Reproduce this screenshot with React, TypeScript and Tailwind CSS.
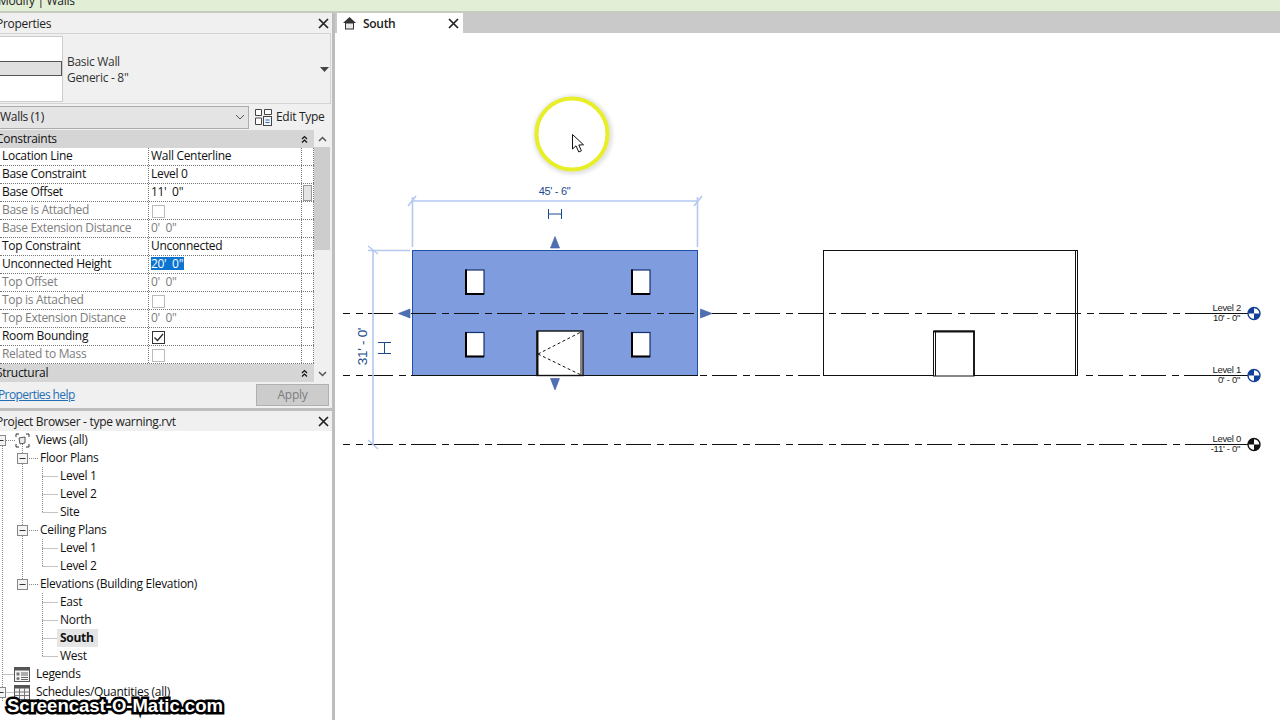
import React from "react";

type Row = { label: string; value?: string; check?: boolean; checked?: boolean; dim?: boolean; selected?: boolean; thumb?: boolean };

const rows: Row[] = [
  { label: "Location Line", value: "Wall Centerline" },
  { label: "Base Constraint", value: "Level 0" },
  { label: "Base Offset", value: "11'  0\"", thumb: true },
  { label: "Base is Attached", check: true, dim: true },
  { label: "Base Extension Distance", value: "0'  0\"", dim: true },
  { label: "Top Constraint", value: "Unconnected" },
  { label: "Unconnected Height", value: "20'  0\"", selected: true },
  { label: "Top Offset", value: "0'  0\"", dim: true },
  { label: "Top is Attached", check: true, dim: true },
  { label: "Top Extension Distance", value: "0'  0\"", dim: true },
  { label: "Room Bounding", check: true, checked: true },
  { label: "Related to Mass", check: true, dim: true },
];

const X = ({ size = 11 }: { size?: number }) => (
  <svg width={size} height={size} viewBox="0 0 11 11" className="shrink-0">
    <path d="M1 1 L10 10 M10 1 L1 10" stroke="#222" strokeWidth="1.7" />
  </svg>
);

const DoubleChevron = () => (
  <svg width="7" height="9" viewBox="0 0 7 9">
    <path d="M1 4 L3.5 1.5 L6 4 M1 7.5 L3.5 5 L6 7.5" fill="none" stroke="#111" strokeWidth="1.2" />
  </svg>
);

function PropRow({ r }: { r: Row }) {
  const color = r.dim ? "text-[#7d7d7d]" : "text-[#111]";
  return (
    <div className={`flex h-[18px] border-b border-dotted border-[#777] bg-white leading-[15px] ${color}`}>
      <div className="w-[149px] shrink-0 border-r border-dotted border-[#777] pl-[2px]">{r.label}</div>
      <div className={`flex w-[153px] shrink-0 border-r border-dotted border-[#777] pl-[2px] ${r.check ? "items-center" : "items-start"}`}>
        {r.check ? (
          <span className={`ml-px mt-[2px] flex h-[13px] w-[13px] items-center justify-center border ${r.checked ? "border-[#333]" : "border-[#bbb]"}`}>
            {r.checked && (
              <svg width="11" height="11" viewBox="0 0 11 11">
                <path d="M1.5 5.5 L4.5 8.5 L10 2" fill="none" stroke="#222" strokeWidth="1.2" />
              </svg>
            )}
          </span>
        ) : r.selected ? (
          <span className="mt-px whitespace-pre bg-[#0a74d0] pr-px leading-[13px] text-white">{r.value}</span>
        ) : (
          <span className="whitespace-pre">{r.value}</span>
        )}
      </div>
      <div className="flex w-[12px] shrink-0 justify-center border-r border-dotted border-[#777]">
        {r.thumb && <div className="mt-px h-[16px] w-[9px] border border-[#999] bg-[#e4e4e4]" />}
      </div>
    </div>
  );
}

const SectionHead = ({ title, h }: { title: string; h: string }) => (
  <div className={`flex ${h} items-center justify-between bg-[#d5d5d5] pr-[6px] text-[#111]`}>
    <span className="-ml-[4px]">{title}</span>
    <DoubleChevron />
  </div>
);

const ViewsIcon = () => (
  <svg width="15" height="15" viewBox="0 0 15 15" className="shrink-0">
    <path d="M1 4 V1 H4 M11 1 H14 V4 M14 11 V14 H11 M4 14 H1 V11" fill="none" stroke="#333" strokeWidth="1" />
    <path d="M4 5 L10 4 V10 L5 11 Z" fill="#ececec" stroke="#555" strokeWidth="1" />
  </svg>
);

const LegendIcon = () => (
  <svg width="16" height="15" viewBox="0 0 16 15" className="shrink-0">
    <rect x="0.5" y="0.5" width="15" height="14" fill="#f5f5f5" stroke="#555" />
    <rect x="0.5" y="0.5" width="15" height="3" fill="#555" />
    <rect x="2.5" y="5.5" width="3" height="3" fill="#777" />
    <circle cx="4" cy="11.5" r="1.6" fill="#777" />
    <path d="M7 6 H14 M7 8 H14 M7 10.5 H14 M7 12.5 H14" stroke="#666" />
  </svg>
);

const TableIcon = () => (
  <svg width="16" height="15" viewBox="0 0 16 15" className="shrink-0">
    <rect x="0.5" y="0.5" width="15" height="14" fill="#f5f5f5" stroke="#555" />
    <rect x="0.5" y="0.5" width="15" height="3" fill="#555" />
    <path d="M0.5 7 H15 M0.5 10.5 H15 M5.5 3 V14 M10.5 3 V14" stroke="#777" />
  </svg>
);

const Box = () => (
  <svg width="11" height="11" viewBox="0 0 11 11" className="shrink-0">
    <rect x="0.5" y="0.5" width="10" height="10" fill="#f4f4f4" stroke="#888" />
    <path d="M2.5 5.5 H8.5" stroke="#333" />
  </svg>
);

type Node = { text: string; pl: string; bold?: boolean };

const tree: Node[] = [
  { text: "Views (all)", pl: "pl-[36px]" },
  { text: "Floor Plans", pl: "pl-[40px]" },
  { text: "Level 1", pl: "pl-[60px]" },
  { text: "Level 2", pl: "pl-[60px]" },
  { text: "Site", pl: "pl-[60px]" },
  { text: "Ceiling Plans", pl: "pl-[40px]" },
  { text: "Level 1", pl: "pl-[60px]" },
  { text: "Level 2", pl: "pl-[60px]" },
  { text: "Elevations (Building Elevation)", pl: "pl-[40px]" },
  { text: "East", pl: "pl-[60px]" },
  { text: "North", pl: "pl-[60px]" },
  { text: "South", pl: "pl-[60px]", bold: true },
  { text: "West", pl: "pl-[60px]" },
  { text: "Legends", pl: "pl-[36px]" },
  { text: "Schedules/Quantities (all)", pl: "pl-[36px]" },
];

function TreeLines() {
  return (
    <svg className="absolute left-0 top-0" width="120" height="289" viewBox="0 0 120 289">
      <g stroke="#888" strokeDasharray="1 1" fill="none">
        <path d="M2.5 9 V270 M2.5 243.5 H14 M2.5 261.5 H14 M6 9.5 H15" />
        <path d="M22.5 9 V153 M27 27.5 H38 M27 99.5 H38 M27 153.5 H38" />
        <path d="M42.5 36 V81 M42.5 45.5 H58 M42.5 63.5 H58 M42.5 81.5 H58" />
        <path d="M42.5 108 V135 M42.5 117.5 H58 M42.5 135.5 H58" />
        <path d="M42.5 162 V225 M42.5 171.5 H58 M42.5 189.5 H58 M42.5 207.5 H58 M42.5 225.5 H58" />
      </g>
    </svg>
  );
}

function TreeRow({ n, i }: { n: Node; i: number }) {
  return (
    <div className={`relative flex h-[18px] items-center leading-[18px] text-[#111] ${n.pl}`}>
      <span className={n.bold ? "-ml-[3px] bg-[#e5e5e5] px-[3px] pr-[4px] font-bold" : ""}>{n.text}</span>
      {i === 0 && <span className="absolute left-[-5px] top-[4px]"><Box /></span>}
      {i === 14 && <span className="absolute left-[-5px] top-[4px]"><Box /></span>}
      {(i === 1 || i === 5 || i === 8) && <span className="absolute left-[17px] top-[4px]"><Box /></span>}
      {i === 0 && <span className="absolute left-[15px] top-[2px]"><ViewsIcon /></span>}
      {i === 13 && <span className="absolute left-[14px] top-[2px]"><LegendIcon /></span>}
      {i === 14 && <span className="absolute left-[14px] top-[2px]"><TableIcon /></span>}
    </div>
  );
}

function LevelHead({ x, y, c }: { x: number; y: number; c: string }) {
  return (
    <g>
      <circle cx={x} cy={y} r="6" fill="#fff" stroke={c} strokeWidth="1.4" />
      <path d={`M${x} ${y} L${x - 6} ${y} A6 6 0 0 1 ${x} ${y - 6} Z`} fill={c} />
      <path d={`M${x} ${y} L${x + 6} ${y} A6 6 0 0 1 ${x} ${y + 6} Z`} fill={c} />
    </g>
  );
}

function Drawing() {
  const dim = "#b4c8f0";
  const navy = "#1c4a8e";
  const arrow = "#4f6fb5";
  const dashes = "25 6 7 5";
  const win = (x: number, y: number, i: number) => (
    <g key={i}>
      <rect x={x} y={y} width="18" height="24" fill="#fff" stroke="#14306e" strokeWidth="1.2" />
      <path d={`M${x} ${y - 0.5} V${y + 24} H${x + 18}`} fill="none" stroke="#000" strokeWidth="2" />
    </g>
  );
  return (
    <svg width="945" height="687" viewBox="335 33 945 687" className="block">
      {/* selected wall */}
      <rect x="412.5" y="250.5" width="285" height="125" fill="#7e9cde" stroke="#1f4fa8" />
      {[[466, 270], [632, 270], [466, 332.5], [632, 332.5]].map(([x, y], i) => win(x, y, i))}
      <rect x="537" y="331" width="46" height="44.5" fill="#fff" stroke="#111" strokeWidth="1.4" />
      <path d="M537.5 331 V376" stroke="#111" strokeWidth="2" />
      <path d="M581 331 V376" stroke="#111" />
      <path d="M538 354 L581 332 M538 354 L581 375" stroke="#111" strokeDasharray="3 2.5" fill="none" />

      {/* level lines */}
      <g stroke="#111" strokeWidth="1" fill="none" strokeDasharray={dashes}>
        <path d="M343 313.5 H1190" strokeDashoffset="18" />
        <path d="M343 444.5 H1190" strokeDashoffset="18" />
        <path d="M343 375.5 H412" strokeDashoffset="18" />
        <path d="M698 375.5 H820" strokeDashoffset="29" />
        <path d="M1080 375.5 H1190" strokeDashoffset="25" />
      </g>
      <path d="M412 375.5 H537 M583 375.5 H698" stroke="#111" strokeWidth="1" />

      {/* other wall */}
      <rect x="823.5" y="250.5" width="254" height="125" fill="none" stroke="#111" strokeWidth="1" />
      <path d="M1075.5 250 V376" stroke="#111" />
      <rect x="933.5" y="331" width="40.5" height="45" fill="#fff" stroke="#111" strokeWidth="1" />
      <path d="M935.5 331 V376" stroke="#111" />
      <path d="M974 331 V376 M934 331.5 H975" stroke="#111" strokeWidth="1.8" />

      {/* dimensions */}
      <g stroke={dim} fill="none">
        <path d="M412 201 H698 M412.5 197 V247 M697.5 197 V247" strokeWidth="1.6" />
        <path d="M408 206 L416 196 M694 206 L702 196 M373 250 V444 M368 250.5 H410" strokeWidth="1.6" />
        <path d="M368 246 L378 254 M368 440 L378 449" strokeWidth="1.4" />
      </g>
      <text x="554.5" y="195" textAnchor="middle" fontSize="11" fill={navy} fontFamily="'Liberation Sans', sans-serif">45' - 6"</text>
      <text x="0" y="0" transform="translate(366.5,346.5) rotate(-90)" textAnchor="middle" fontSize="13.5" fill={navy} fontFamily="'Liberation Sans', sans-serif">31' - 0'</text>
      <path d="M548.5 209 V219 M561.5 209 V219 M548.5 214 H561.5" stroke={navy} strokeWidth="1" />
      <path d="M378 342.5 H391 M378 353.5 H391 M384.5 342.5 V353.5" stroke={navy} strokeWidth="1" />

      {/* drag arrows */}
      <g fill={arrow} stroke="#3f5d9f" strokeWidth="0.6">
        <path d="M555 236.5 L559.5 248 H550.5 Z" />
        <path d="M555 390 L559.5 378.5 H550.5 Z" />
        <path d="M398.5 313.5 L410 309 V318 Z" />
        <path d="M712 313.5 L700.5 309 V318 Z" />
      </g>

      {/* level tags */}
      {[
        { y: 313.5, n: "Level 2", e: "10' - 0\"", c: "#12409a" },
        { y: 375.5, n: "Level 1", e: "0' - 0\"", c: "#12409a" },
        { y: 444.5, n: "Level 0", e: "-11' - 0\"", c: "#111" },
      ].map((l) => (
        <g key={l.n}>
          <path d={`M1190 ${l.y} H1248`} stroke="#111" strokeWidth="1" />
          <text x="1241" y={l.y - 2.5} textAnchor="end" fontSize="9.5" fill="#222" fontFamily="'Liberation Sans', sans-serif">{l.n}</text>
          <text x="1240" y={l.y + 7.5} textAnchor="end" fontSize="9.5" fill="#222" fontFamily="'Liberation Sans', sans-serif">{l.e}</text>
          <LevelHead x={1254} y={l.y} c={l.c} />
        </g>
      ))}

      {/* recorder cursor highlight */}
      <circle cx="573" cy="135" r="37" fill="none" stroke="#000" strokeOpacity="0.16" strokeWidth="4" className="blur-[2px]" />
      <circle cx="572" cy="134" r="35.5" fill="#fff" stroke="#e8ee28" strokeWidth="4" className="blur-[0.6px]" />
      <path d="M572.5 134.5 V149 L576 145.8 L578.8 152 L581.4 150.8 L578.8 145 L583.5 144.8 Z" fill="#fff" stroke="#111" strokeWidth="1" />
    </svg>
  );
}

export default function App() {
  return (
    <div className="relative flex h-[720px] w-[1280px] flex-col overflow-hidden bg-white font-['Open_Sans',_sans-serif] text-[12px] tracking-[-0.3px]">
      {/* ribbon context bar */}
      <div className="flex h-[13px] shrink-0 items-end overflow-hidden border-b-2 border-[#c7cbbd] bg-[#e2eed5] pb-[4px] leading-[12px] text-[#222]">
        <span className="-ml-[2px]">Modify | Walls</span>
      </div>

      <div className="flex min-h-0 flex-1">
        {/* left column */}
        <div className="flex w-[335px] shrink-0 flex-col border-r-[3px] border-[#bdbdbd] bg-[#f0f0f0]">
          {/* properties */}
          <div className="flex h-[20px] shrink-0 items-center justify-between pr-[3px] text-[#222]">
            <span className="-ml-[4px] mt-[2px]">Properties</span>
            <X />
          </div>
          <div className="mr-[1px] flex h-[71px] shrink-0 items-center border border-l-0 border-[#d4d4d4]">
            <div className="flex h-[66px] w-[63px] shrink-0 items-center border border-l-0 border-[#ccc] bg-white">
              <div className="h-[15px] w-full border-y border-r border-[#555] bg-[#e0e0e0]" />
            </div>
            <div className="ml-[4px] mt-[2px] flex-1 leading-[16px] text-[#333]">
              <div>Basic Wall</div>
              <div>Generic - 8"</div>
            </div>
            <svg width="9" height="5" viewBox="0 0 9 5" className="mr-[1px] mt-[1px]"><path d="M0 0 H9 L4.5 5 Z" fill="#444" /></svg>
          </div>
          <div className="mt-[1px] flex h-[24px] shrink-0 items-center">
            <div className="flex h-[23px] w-[249px] items-center justify-between border border-l-0 border-[#acacac] bg-[#e4e4e4] pr-[3px] text-[#222]">
              <span>Walls (1)</span>
              <svg width="10" height="6" viewBox="0 0 10 6"><path d="M1 1 L5 5 L9 1" fill="none" stroke="#555" strokeWidth="1" /></svg>
            </div>
            <svg width="18" height="17" viewBox="0 0 18 17" className="ml-[6px]">
              <path d="M.5 .5 H6.5 V6.5 H.5 Z M9.5 .5 H16.5 V5.5 H9.5 Z M.5 9 H6.5 V15.5 H.5 Z" fill="#fff" stroke="#444" />
              <rect x="8.5" y="7.5" width="8" height="9" fill="#eef4fa" stroke="#444" />
              <path d="M10.5 11 H14.5 M10.5 13.5 H14.5" stroke="#2b6cb0" />
            </svg>
            <span className="ml-[3px] text-[#222]">Edit Type</span>
          </div>
          <div className="mt-[1px] flex min-h-0 shrink-0">
            <div className="w-[314px] shrink-0">
              <SectionHead title="Constraints" h="h-[18px]" />
              {rows.map((r) => (
                <PropRow key={r.label} r={r} />
              ))}
              <SectionHead title="Structural" h="h-[18px]" />
            </div>
            <div className="flex w-[16px] shrink-0 flex-col items-center justify-between">
              <div className="flex w-full flex-1 flex-col">
                <div className="flex h-[17px] shrink-0 items-center justify-center">
                  <svg width="9" height="6" viewBox="0 0 9 6"><path d="M1 5 L4.5 1.5 L8 5" fill="none" stroke="#555" strokeWidth="1.5" /></svg>
                </div>
                <div className="h-[103px] w-full bg-[#cdcdcd]" />
              </div>
              <div className="flex h-[17px] shrink-0 items-center justify-center">
                <svg width="9" height="6" viewBox="0 0 9 6"><path d="M1 1 L4.5 4.5 L8 1" fill="none" stroke="#555" strokeWidth="1.5" /></svg>
              </div>
            </div>
          </div>
          <div className="flex h-[26px] shrink-0 items-center justify-between pr-[3px]">
            <span className="-ml-[2px] tracking-[-0.6px] text-[#1f6fb5] underline">Properties help</span>
            <div className="flex h-[22px] w-[73px] items-center justify-center border border-[#b0b0b0] bg-[#cccccc] text-[#7c7c7c]">Apply</div>
          </div>

          {/* splitter */}
          <div className="h-[3px] shrink-0 bg-[#bdbdbd]" />

          {/* browser */}
          <div className="flex h-[20px] shrink-0 items-center justify-between pr-[3px] text-[#222]">
            <span className="-ml-[4px] mt-[2px]">Project Browser - type warning.rvt</span>
            <X />
          </div>
          <div className="relative min-h-0 flex-1 overflow-hidden bg-white">
            <TreeLines />
            {tree.map((n, i) => (
              <TreeRow key={i} n={n} i={i} />
            ))}
          </div>
        </div>

        {/* view area */}
        <div className="flex min-w-0 flex-1 flex-col">
          <div className="flex h-[20px] shrink-0 bg-[#c9c9c9]">
            <div className="ml-[2px] flex w-[126px] items-center bg-white pl-[5px] pr-[4px] font-semibold text-[#222]">
              <svg width="15" height="14" viewBox="0 0 15 14" className="shrink-0">
                <path d="M7.5 1 L14 7 H1 Z" fill="#333" />
                <rect x="3.5" y="7" width="8" height="6" fill="#e8e8e8" stroke="#333" />
              </svg>
              <span className="ml-[6px] mt-[2px] flex-1">South</span>
              <X />
            </div>
          </div>
          <Drawing />
        </div>
      </div>

      {/* recorder watermark */}
      <div className="absolute bottom-[3px] left-[7px] font-['Liberation_Sans',_sans-serif] text-[18.5px] font-bold leading-[22px] tracking-normal text-white [-webkit-text-stroke:5px_#000] [paint-order:stroke_fill]">
        Screencast-O-Matic.com
      </div>
    </div>
  );
}
